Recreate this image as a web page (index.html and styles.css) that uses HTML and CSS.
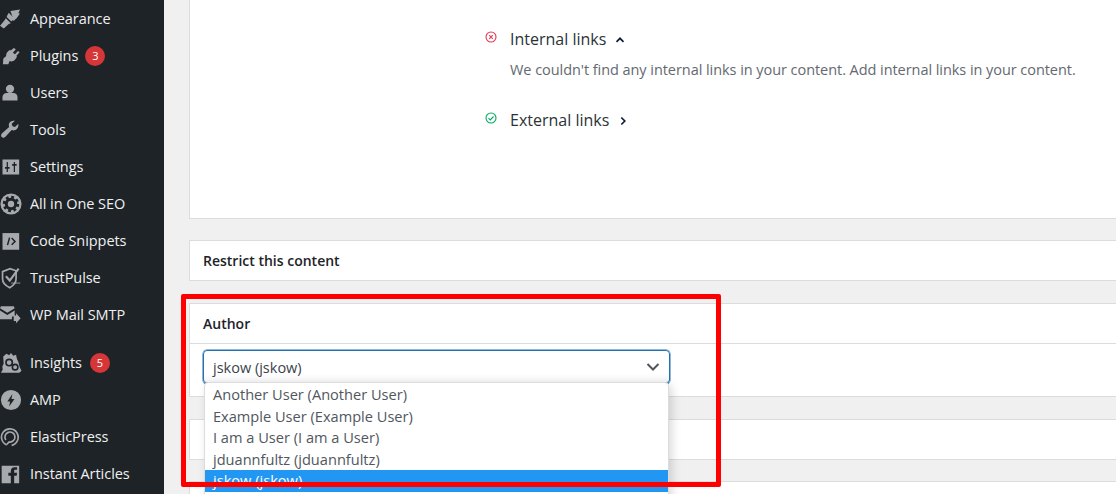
FILE: index.html
```html
<!DOCTYPE html>
<html lang="en">
<head>
<meta charset="utf-8">
<title>Edit post</title>
<link rel="stylesheet" href="styles.css">
</head>
<body>
<div class="page">
  <nav class="sidebar">
    <ul class="menu">
      <li class="item"><svg class="ico" viewBox="0 0 24 24"><path d="M12.500 2.500L24 .5l-2 4.500 2 .5-4 5.500-3.500 2.500z"/><path d="M10.500 4.500l8 8-2 1.500-1.500-.5-1.500 1.500L8 9.500l.5-1.500z"/><path d="M7 11l6 6-2.500 1-6 5.500L0 20l5-6z"/></svg><span>Appearance</span></li>
      <li class="item"><svg class="ico" viewBox="0 0 24 24"><path d="M16.500 2.500l2.500 1.500-3.500 4 2.500 2 3.500-4 2 1.500-4 4.500 1 1-2.500 3.500c-2 2-4.500 2.500-6.500 1.500L10 22H3.500l.5-7 3.500-3c-.5-2 .5-4 2-5.500L12 4.500l1 1z"/></svg><span>Plugins</span><b class="badge badge-a">3</b></li>
      <li class="item"><svg class="ico" viewBox="0 0 24 24"><circle cx="12" cy="7" r="5"/><path d="M3 21v-4c0-3 2-5 5-5h8c3 0 5 2 5 5v4z"/></svg><span>Users</span></li>
      <li class="item"><svg class="ico" viewBox="0 0 24 24"><path d="M22 4.500l-4 4-3-1-1-3 4-3.500c-3-.8-6 .4-7 3-.7 1.600-.5 3 0 4.500L2.500 16c-1.500 1.500-1.500 3.500-.5 4.500s3 1 4.500-.5l7.500-8c1.500.5 3 .7 4.500 0 2.800-1.200 4-4.500 3.500-7.500z"/></svg><span>Tools</span></li>
      <li class="item"><svg class="ico" viewBox="0 0 24 24"><path fill-rule="evenodd" d="M3 3h20v18H3zM8 6v6H6v2h2v4h1.500v-4h2v-2h-2V6zm8.500 0v2.500h-2v2h2V18H18v-7.500h2v-2h-2V6z"/></svg><span>Settings</span></li>
      <li class="item"><svg class="ico ico-lg" viewBox="0 0 24 24"><circle cx="12" cy="12" r="11.500"/><circle class="cut-line cut-teeth" cx="12" cy="12" r="7.500"/><circle class="cut" cx="12" cy="12" r="6.800"/><circle cx="12" cy="12" r="3.500"/></svg><span>All in One SEO</span></li>
      <li class="item"><svg class="ico" viewBox="0 0 24 24"><rect x="3" y="2.500" width="20" height="20"/><path class="cut-line" d="M11.500 8L9 17M14 8.500l4 4-4 4"/></svg><span>Code Snippets</span></li>
      <li class="item"><svg class="ico ico-lg ico-line" viewBox="0 0 24 26"><path d="M2 5.500L11 2l7 2.500V14c0 4-3 8-7.500 10.500C5 22 2 18 2 14z"/><path class="thick" d="M6 11l4.500 5L21 2"/><path class="thin" d="M12 19h11"/></svg><span>TrustPulse</span></li>
      <li class="item item-last"><svg class="ico ico-mail" viewBox="0 0 24 20"><path d="M0 2l1-2h14l1 2-8 5z"/><path d="M0 4.500l8 5 8-5V11h-3v3H0z"/><path d="M15 10h2.500V7.500L22.500 13l-5 5.500V16H15z"/></svg><span>WP Mail SMTP</span></li>
      <li class="item"><svg class="ico ico-lg" viewBox="0 0 24 24"><path d="M7 2l3 1.500L12 1l2.500 3 3-1 1 4.500 1.500 3 1.500 6 2 4-2.500 2H1l2-3.500-.5-3 1.500-3.500L3.500 5z"/><circle class="cut-line" cx="10" cy="11.500" r="3.500"/><circle class="cut-line" cx="16.500" cy="16.500" r="3"/></svg><span>Insights</span><b class="badge badge-b">5</b></li>
      <li class="item"><svg class="ico ico-lg" viewBox="0 0 24 24"><path fill-rule="evenodd" d="M12 1a11 11 0 1 0 0 22 11 11 0 0 0 0-22zm1.500 4.500L8 13.500h3l-1 5.500 5.800-8h-3.300z"/></svg><span>AMP</span></li>
      <li class="item"><svg class="ico ico-line" viewBox="0 0 24 24"><path d="M8 21.500a10 10 0 1 1 6 .5"/><path class="thin-ring" d="M7 15.500a6 6 0 1 1 4 2.500l-3 3"/></svg><span>ElasticPress</span></li>
      <li class="item"><svg class="ico" viewBox="0 0 24 24"><path fill-rule="evenodd" d="M2 2h21v21h-6v-9h3l.5-3.500H17V8.500c0-1 .5-1.500 1.500-1.500h2V4h-3c-3 0-4.500 1.800-4.500 4.500v2h-3V14h3v9H2z"/></svg><span>Instant Articles</span></li>
    </ul>
  </nav>
  <main class="content">
    <section class="card card-analysis">
      <div class="check">
        <svg class="status" viewBox="0 0 12 12" fill="none" stroke="#df3a57" stroke-width="1.100"><circle cx="6" cy="6" r="5"/><path d="M4.200 4.200l3.600 3.600M7.800 4.200L4.200 7.800"/></svg>
        <div>
          <div class="check-title">Internal links <svg class="chev" viewBox="0 0 10 10" fill="none" stroke="#141b38" stroke-width="1.700"><path d="M1.500 6.800L5 3.300l3.500 3.500"/></svg></div>
          <p class="check-text">We couldn't find any internal links in your content. Add internal links in your content.</p>
        </div>
      </div>
      <div class="check">
        <svg class="status" viewBox="0 0 12 12" fill="none" stroke="#00aa63" stroke-width="1.100"><circle cx="6" cy="6" r="5"/><path d="M3.500 6.200l1.800 1.700 3.200-3.400"/></svg>
        <div class="check-title">External links <svg class="chev" viewBox="0 0 10 10" fill="none" stroke="#141b38" stroke-width="1.700"><path d="M3.300 1.500L6.800 5 3.300 8.500"/></svg></div>
      </div>
    </section>
    <section class="card card-restrict"><h2 class="card-head">Restrict this content</h2></section>
    <section class="card card-author">
      <h2 class="card-head card-head-line">Author</h2>
      <div class="author-body">
        <div class="select">
          <span>jskow (jskow)</span>
          <svg class="select-arrow" viewBox="0 0 14 10" fill="none" stroke="#50575e" stroke-width="2"><path d="M1.500 2l5.500 5.500L12.500 2"/></svg>
        </div>
        <ul class="options">
          <li class="option">Another User (Another User)</li>
          <li class="option">Example User (Example User)</li>
          <li class="option">I am a User (I am a User)</li>
          <li class="option">jduannfultz (jduannfultz)</li>
          <li class="option option-on">jskow (jskow)</li>
        </ul>
      </div>
    </section>
    <section class="card card-empty"></section>
    <section class="card card-empty"></section>
  </main>
  <div class="highlight"></div>
</div>
</body>
</html>
```
FILE: styles.css
```css
* { box-sizing: border-box; }
html, body { margin: 0; padding: 0; }
body { font-family: "Open Sans", "Noto Sans", sans-serif; background: #f0f0f1; }
.page { position: relative; display: flex; width: 1116px; height: 494px; overflow: hidden; }
.sidebar { flex: 0 0 164px; background: #1d2327; }
.menu { list-style: none; margin: 0; padding: 0; }
.item { display: flex; align-items: center; height: 37px; color: #f0f0f1; font-size: 14.500px; letter-spacing: -.05px; position: relative; padding-left: 30px; }
.item-last { margin-bottom: 11px; }
.ico { position: absolute; left: 0; top: 50%; width: 20px; height: 20px; margin-top: -10px; fill: #a7aaad; }
.ico-lg { left: 0; width: 22px; height: 22px; margin-top: -11px; }
.ico-mail { left: 0; width: 22px; height: 19px; margin-top: -9px; }
.ico-line { fill: none; stroke: #a7aaad; stroke-width: 2; }
.thick { stroke-width: 2.600; }
.thin { stroke-width: 1; }
.thin-ring { stroke-width: 2; }
.cut { fill: #1d2327; }
.cut-line { fill: none; stroke: #1d2327; stroke-width: 1.800; }
.cut-teeth { stroke-width: 3; stroke-dasharray: 3 2.890; }
.badge { display: inline-flex; align-items: center; justify-content: center; width: 20px; height: 20px; border-radius: 50%; background: #d63638; color: #fff; font-size: 11px; font-weight: 400; }
.badge-a { margin-left: 7px; }
.badge-b { margin-left: 8px; }
.content { flex: 1; padding-left: 25px; margin-right: -10px; }
.card { background: #fff; border: 1px solid #dcdcde; margin-bottom: 21px; }
.card-analysis { height: 220px; margin-top: -1px; padding: 27px 0 0 295px; }
.card-restrict { margin-bottom: 22px; }
.check { display: flex; align-items: flex-start; margin-bottom: 27px; }
.status { flex: 0 0 12px; width: 12px; height: 12px; margin: 4px 13px 0 0; }
.check-title { color: #2c3338; font-size: 16px; line-height: 24px; display: flex; align-items: center; gap: 9px; }
.chev { width: 10px; height: 10px; margin-top: 1px; }
.check-text { margin: 8px 0 0; color: #646970; font-size: 14.500px; line-height: 22px; letter-spacing: -.055px; white-space: nowrap; }
.card-head { margin: 0; padding: 0 13px; height: 39px; line-height: 39px; font-size: 14px; font-weight: 600; color: #1d2327; }
.card-head-line { height: 40px; line-height: 40px; border-bottom: 1px solid #dcdcde; }
.card-author { height: 94px; margin-bottom: 22px; }
.author-body { position: relative; padding: 6px 13px 0; }
.select { display: flex; align-items: center; justify-content: space-between; width: 467px; height: 34px; padding: 0 9px; color: #3c434a; font-size: 14.500px; border: 1px solid #2271b1; border-radius: 4px; background: linear-gradient(#fff 70%, #f4f4f4); box-shadow: 0 0 0 .5px #2271b1, inset 0 -1px 0 #a0a5aa; }
.select-arrow { width: 14px; height: 10px; margin-right: 0; }
.options { list-style: none; margin: 0; padding: 1px 0 0; position: absolute; left: 14px; top: 38px; width: 465px; height: 130px; background: #fff; border: 1px solid #dcdcde; border-radius: 4px 4px 0 0; box-shadow: 3px 3px 10px rgba(0,0,0,.15); font-size: 14.600px; color: #50575e; z-index: 1; }
.option { height: 21.500px; line-height: 21.500px; padding-left: 8px; }
.option-on { background: #2196f3; color: #fff; }
.card-empty { height: 41px; }
.highlight { position: absolute; left: 181px; top: 294px; width: 540px; height: 193px; border: 5px solid #f00; border-radius: 2px; z-index: 2; }
```
